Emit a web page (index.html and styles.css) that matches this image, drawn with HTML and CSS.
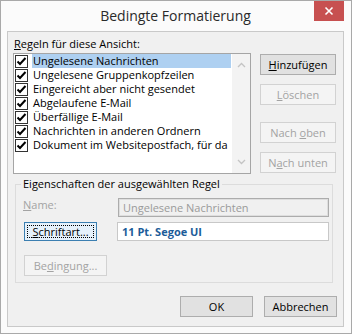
FILE: index.html
```html
<!DOCTYPE html>
<html lang="de">
<head>
<meta charset="utf-8">
<title>Bedingte Formatierung</title>
<link rel="stylesheet" href="styles.css">
</head>
<body>
<div class="window">
  <div class="titlebar">
    <span></span>
    <div class="title">Bedingte Formatierung</div>
    <div class="close-wrap">
      <div class="close">
        <svg width="10" height="10" viewBox="0 0 10 10"><path d="M1.5 1.5 L8.5 8.5 M8.5 1.5 L1.5 8.5" stroke="#fff" stroke-width="1.6" fill="none"/></svg>
      </div>
    </div>
  </div>
  <div class="client">
    <div class="top">
      <div class="rules">
        <div class="label"><u>R</u>egeln für diese Ansicht:</div>
        <div class="listbox">
          <div class="rows">
            <div class="row selected"><span class="cb"><svg width="11" height="11" viewBox="0 0 11 11"><path d="M1.5 5.5 L4 8 L9.5 2" stroke="#000" stroke-width="2" fill="none"/></svg></span><span class="txt">Ungelesene Nachrichten</span></div>
            <div class="row"><span class="cb"><svg width="11" height="11" viewBox="0 0 11 11"><path d="M1.5 5.5 L4 8 L9.5 2" stroke="#000" stroke-width="2" fill="none"/></svg></span><span class="txt">Ungelesene Gruppenkopfzeilen</span></div>
            <div class="row"><span class="cb"><svg width="11" height="11" viewBox="0 0 11 11"><path d="M1.5 5.5 L4 8 L9.5 2" stroke="#000" stroke-width="2" fill="none"/></svg></span><span class="txt">Eingereicht aber nicht gesendet</span></div>
            <div class="row"><span class="cb"><svg width="11" height="11" viewBox="0 0 11 11"><path d="M1.5 5.5 L4 8 L9.5 2" stroke="#000" stroke-width="2" fill="none"/></svg></span><span class="txt">Abgelaufene E-Mail</span></div>
            <div class="row"><span class="cb"><svg width="11" height="11" viewBox="0 0 11 11"><path d="M1.5 5.5 L4 8 L9.5 2" stroke="#000" stroke-width="2" fill="none"/></svg></span><span class="txt">Überfällige E-Mail</span></div>
            <div class="row"><span class="cb"><svg width="11" height="11" viewBox="0 0 11 11"><path d="M1.5 5.5 L4 8 L9.5 2" stroke="#000" stroke-width="2" fill="none"/></svg></span><span class="txt">Nachrichten in anderen Ordnern</span></div>
            <div class="row"><span class="cb"><svg width="11" height="11" viewBox="0 0 11 11"><path d="M1.5 5.5 L4 8 L9.5 2" stroke="#000" stroke-width="2" fill="none"/></svg></span><span class="txt">Dokument im Websitepostfach, für da</span></div>
          </div>
          <div class="scrollbar">
            <svg width="9" height="6" viewBox="0 0 9 6"><path d="M1 5 L4.5 1.5 L8 5" stroke="#c4c4c4" stroke-width="1.3" fill="none"/></svg>
            <svg width="9" height="6" viewBox="0 0 9 6"><path d="M1 1 L4.5 4.5 L8 1" stroke="#c4c4c4" stroke-width="1.3" fill="none"/></svg>
          </div>
        </div>
      </div>
      <div class="side">
        <div class="btn"><span><u>H</u>inzufügen</span></div>
        <div class="btn disabled"><span><u>L</u>öschen</span></div>
        <div class="btn disabled gap-big"><span>Nach <u>o</u>ben</span></div>
        <div class="btn disabled"><span>N<u>a</u>ch unten</span></div>
      </div>
    </div>
    <fieldset class="group">
      <legend>Eigenschaften der ausgewählten Regel</legend>
      <div class="props">
        <div class="prop-label"><u>N</u>ame:</div>
        <div class="field disabled-field">Ungelesene Nachrichten</div>
        <div class="btn focus"><span class="focus-ring"><span><u>S</u>chriftart...</span></span></div>
        <div class="field font-field">11 Pt. Segoe UI</div>
      </div>
      <div class="btn disabled cond"><span>Be<u>d</u>ingung...</span></div>
    </fieldset>
    <div class="footer">
      <div class="btn wide"><span>OK</span></div>
      <div class="btn wide"><span>Abbrechen</span></div>
    </div>
  </div>
</div>
</body>
</html>
```
FILE: styles.css
```css
* { box-sizing: border-box; }
html, body { margin: 0; padding: 0; background: #fff; }
body { font-family: "Open Sans", "Noto Sans", sans-serif; font-size: 11px; color: #000; }
u { text-decoration: underline; text-underline-offset: 1px; }

.window {
  width: 352px;
  height: 334px;
  border: 1px solid #a9a9a9;
  background: #fbfbfb;
  padding: 0 7px 6px 6px;
  display: flex;
  flex-direction: column;
}

.titlebar {
  height: 30px;
  display: grid;
  grid-template-columns: 1fr auto 1fr;
  align-items: start;
}
.title {
  font-size: 14px;
  line-height: 30px;
  color: #2a2a2a;
}
.close-wrap { display: flex; justify-content: flex-end; }
.close {
  width: 30px;
  height: 20px;
  background: #c75050;
  display: flex;
  align-items: center;
  justify-content: center;
}

.client {
  flex: 1;
  border: 1px solid #c9c9c9;
  background: #f0f0f0;
  padding: 5px 5px 0 5px;
  display: flex;
  flex-direction: column;
}

.top { display: flex; gap: 9px; }
.rules { width: 238px; }
.label { line-height: 14px; padding-left: 1px; margin-bottom: 2px; }

.listbox {
  height: 121px;
  border: 1px solid #a5a5a5;
  background: #fff;
  display: flex;
}
.rows { flex: 1; padding-left: 1px; }
.row { height: 14px; display: flex; align-items: center; line-height: 14px; white-space: nowrap; overflow: hidden; }
.cb {
  width: 13px; height: 13px;
  border: 1px solid #333;
  background: #fff;
  display: flex; align-items: center; justify-content: center;
  flex: none;
}
.txt { flex: 1; padding-left: 1px; margin-left: 4px; height: 14px; }
.row.selected .txt { background: #aed0f1; }

.scrollbar {
  width: 18px;
  background: #f3f3f3;
  margin-left: 1px;
  display: flex;
  flex-direction: column;
  justify-content: space-between;
  align-items: center;
  padding: 8px 0 8px;
}

.side { display: flex; flex-direction: column; gap: 9px; padding-top: 17px; }
.btn {
  width: 76px;
  height: 21px;
  border: 1px solid #adadad;
  background: #e1e1e1;
  display: flex; align-items: center; justify-content: center;
  line-height: 14px;
  white-space: nowrap;
}
.btn.disabled { border-color: #d2d2d2; background: #f4f4f4; color: #a3a3a3; }
.btn.gap-big { margin-top: 8px; }

.group {
  margin: 3px 5px 0 2px;
  border: 1px solid #dcdcdc;
  padding: 5px 8px 6px 8px;
  min-width: 0;
}
.group legend { padding: 0 2px; margin-left: -3px; line-height: 14px; }

.props {
  display: grid;
  grid-template-columns: 94px 211px;
  row-gap: 5px;
  align-items: start;
}
.prop-label { color: #a3a3a3; line-height: 14px; margin-top: 2px; margin-left: -1px; }
.field {
  height: 19px;
  line-height: 17px;
  padding-left: 4px;
  white-space: nowrap;
}
.disabled-field {
  border: 1px solid #acacac;
  box-shadow: inset 0 0 0 1px #dedede;
  background: #f0f0f0;
  color: #9a9a9a;
  margin-top: 2px;
}
.font-field {
  border: 1px solid #c8c8c8;
  background: #fff;
  color: #1c5c99;
  font-weight: bold;
  margin-left: -1px;
  width: 212px;
}
.btn.focus {
  width: 73px;
  height: 19px;
  border-color: #3c7fb1;
  background: #e5f1fb;
  padding: 2px;
}
.focus-ring {
  flex: 1; align-self: stretch;
  border: 1px dotted #000;
  display: flex; align-items: center; justify-content: center;
}
.btn.cond { width: 83px; margin-top: 14px; }

.footer { display: flex; justify-content: flex-end; gap: 11px; margin-top: 13px; padding-right: 1px; }
.btn.wide { width: 73px; }
```
